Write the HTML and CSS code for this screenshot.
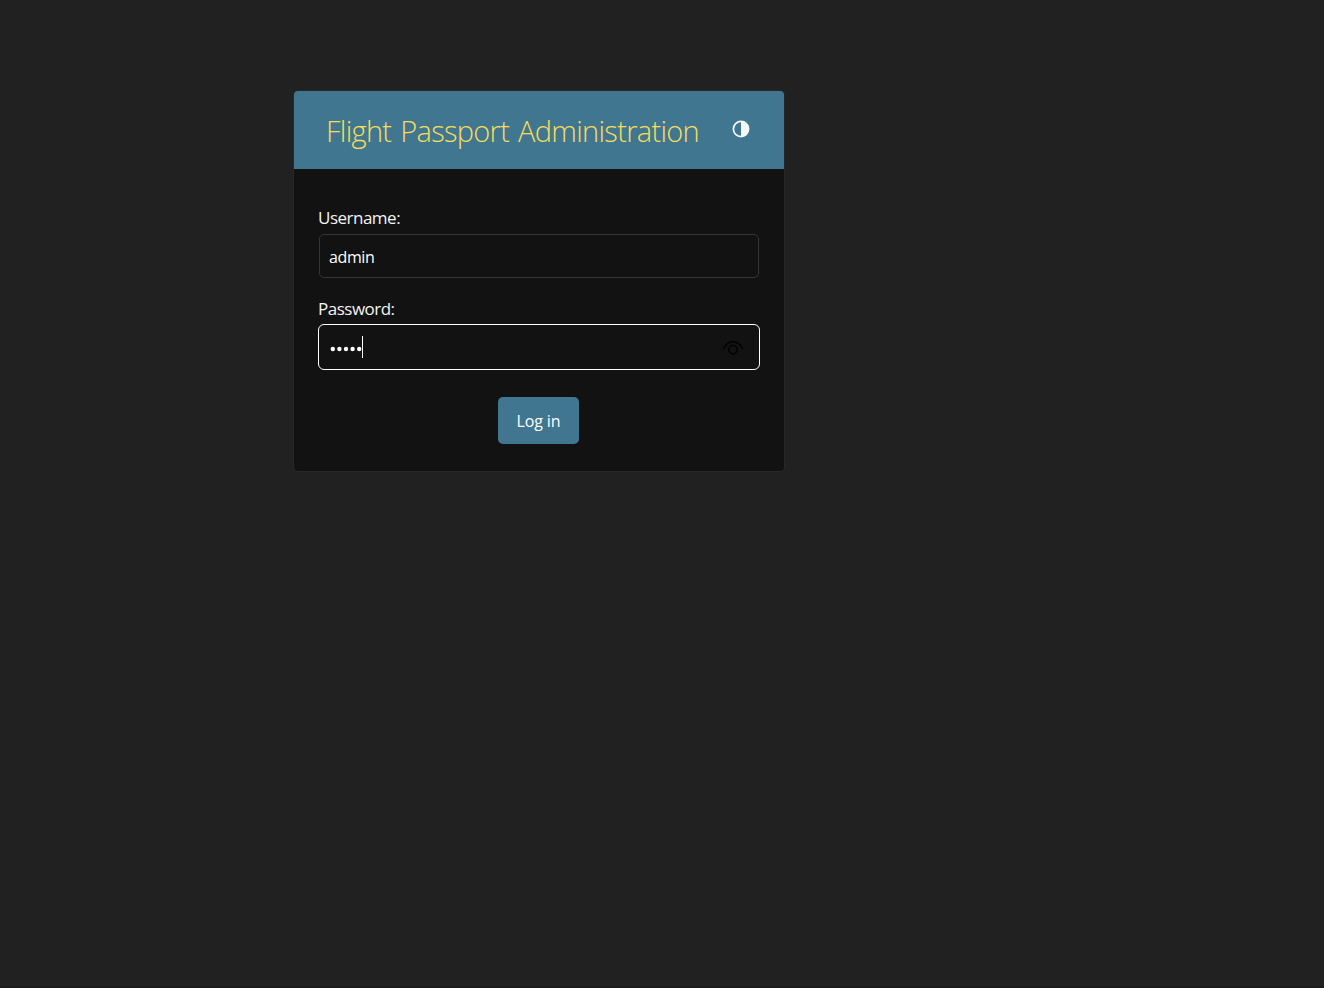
FILE: index.html
```html
<!DOCTYPE html>
<html lang="en">
<head>
<meta charset="utf-8">
<title>Log in | Flight Passport Administration</title>
<link rel="stylesheet" href="styles.css">
</head>
<body>
<main class="login-card">
  <header class="card-header">
    <h1 class="site-title">Flight Passport Administration</h1>
    <button class="theme-toggle" type="button" aria-label="Toggle theme">
      <svg width="18" height="18" viewBox="0 0 18 18"><circle cx="9" cy="9" r="7.6" fill="none" stroke="#f7f9fa" stroke-width="1.7"/><path d="M9 1.2a7.8 7.8 0 0 1 0 15.6z" fill="#f7f9fa"/></svg>
    </button>
  </header>
  <form class="login-form">
    <label class="field-label" for="username">Username:</label>
    <div class="field" id="username"><span class="value">admin</span></div>
    <label class="field-label password-label" for="password">Password:</label>
    <div class="field focused" id="password">
      <svg class="dots" width="32" height="6" viewBox="0 0 32 6" fill="#fff"><circle cx="2.8" cy="3" r="2.2"/><circle cx="9.4" cy="3" r="2.2"/><circle cx="16" cy="3" r="2.2"/><circle cx="22.6" cy="3" r="2.2"/><circle cx="29.2" cy="3" r="2.2"/></svg>
      <span class="caret"></span>
      <svg class="reveal" width="22" height="16" viewBox="0 0 22 16" fill="none" stroke="#000" stroke-width="1.4"><path d="M1.4 9C3.4 4 6.8 1.7 11 1.7S18.6 4 20.6 9"/><circle cx="11" cy="9.6" r="4.2"/></svg>
    </div>
    <button class="submit" type="button">Log in</button>
  </form>
</main>
</body>
</html>
```
FILE: styles.css
```css
* { box-sizing: border-box; }
body {
  margin: 0;
  min-height: 988px;
  padding: 90px 0 0 293px;
  background: #212121;
  color: #fff;
  font-family: "Open Sans", "Noto Sans", sans-serif;
}
.login-card {
  width: 492px;
  height: 382px;
  border: 1px solid #282828;
  border-radius: 5px;
  background: #121212;
  overflow: hidden;
}
.card-header {
  display: flex;
  height: 78px;
  padding: 0 34px 0 32px;
  justify-content: space-between;
  align-items: flex-start;
  background: #417690;
}
.site-title {
  margin: 20px 0 0;
  font-size: 29px;
  line-height: 40px;
  font-weight: 300;
  letter-spacing: -0.7px;
  word-spacing: 2px;
  color: #f5dd5d;
  white-space: nowrap;
}
.theme-toggle {
  display: flex;
  margin: 29px 0 0;
  padding: 0;
  border: 0;
  background: none;
}
.login-form {
  display: flex;
  flex-direction: column;
  padding: 36px 25px 0;
}
.field-label {
  height: 24px;
  margin: 0 0 5px -1px;
  font-size: 17px;
  line-height: 26px;
  letter-spacing: -0.5px;
  color: #f4f4f4;
}
.field {
  display: flex;
  height: 44px;
  padding: 0 9px;
  align-items: center;
  border: 1px solid #353535;
  border-radius: 5px;
}
.value {
  font-size: 16px;
  line-height: 24px;
  padding-top: 2px;
  letter-spacing: -0.4px;
}
.password-label { margin-top: 18px; margin-bottom: 4px; }
.focused {
  height: 46px;
  margin: 0 -1px;
  border-color: #fff;
  border-radius: 6px;
  padding: 0 15px 0 11px;
}
.dots { margin-top: 3px; }
.caret { width: 1px; height: 22px; background: #fff; }
.reveal { margin: 2px 0 0 auto; }
.submit {
  align-self: center;
  width: 81px;
  height: 47px;
  margin: 27px 1px 0 0;
  padding: 1px 0 0;
  border: 0;
  border-radius: 5px;
  background: #417690;
  color: #fff;
  font: 16px/24px "Open Sans", "Noto Sans", sans-serif;
  letter-spacing: -0.1px;
}
body::after {
  content: "";
  display: block;
  height: 2px;
  margin: 514px 0 0 -293px;
  background: #1d1b1b;
}
```
